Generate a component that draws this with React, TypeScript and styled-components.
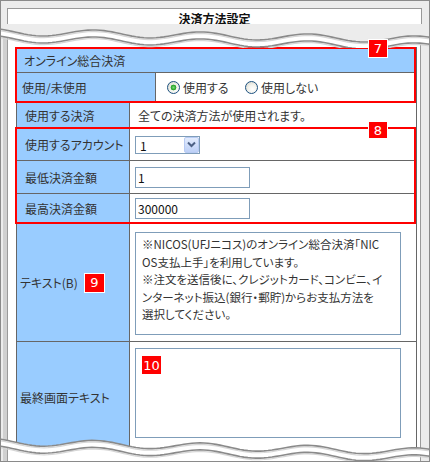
import React from "react";
import styled, { createGlobalStyle } from "styled-components";

const GlobalStyle = createGlobalStyle`
  html, body {
    margin: 0;
    padding: 0;
    background: #fff;
  }
  body {
    font-family: "Noto Sans CJK JP", "Liberation Sans", sans-serif;
    font-size: 12px;
    font-feature-settings: "palt" 1;
    color: #333;
  }
`;

const Frame = styled.div`
  position: relative;
  width: 430px;
  height: 462px;
  box-sizing: border-box;
  border: 1px solid #8a8a8a;
  background: #ececec;
  display: flex;
  flex-direction: column;
  overflow: hidden;
`;

const Header = styled.div`
  height: 35px;
  flex-shrink: 0;
  box-sizing: border-box;
  padding: 7px 0 0 6px;
`;

const TitleBox = styled.div`
  width: 415px;
  height: 20px;
  box-sizing: border-box;
  border: 1px solid #999;
  background: #fff;
  display: flex;
  align-items: center;
  justify-content: center;
  font-weight: bold;
  color: #111;
`;

const Sheet = styled.div`
  flex: 1;
  margin-left: 6px;
  width: 414px;
  box-sizing: border-box;
  border-left: 1px solid #9a9a9a;
  border-right: 1px solid #9a9a9a;
  background: #fff;
  box-shadow: -4px 0 0 #d0d0d0;
  padding: 11px 0 0 8px;
  overflow: hidden;
`;

const Table = styled.div`
  width: 401px;
  box-sizing: border-box;
  border: 1px solid #666;
  border-bottom: none;
`;

const Group = styled.div<{ $lift: number }>`
  position: relative;
  &::after {
    content: "";
    position: absolute;
    top: ${(p) => -p.$lift}px;
    left: -2px;
    right: 0;
    bottom: 0;
    border: 2px solid #ff0000;
    pointer-events: none;
  }
`;

const Row = styled.div<{ $h: number; $last?: boolean }>`
  display: flex;
  height: ${(p) => p.$h}px;
  box-sizing: border-box;
  border-bottom: ${(p) => (p.$last ? "none" : "1px solid #666")};
`;

const Caption = styled.div`
  flex: 1;
  display: flex;
  align-items: center;
  padding-left: 7px;
  background: #99ccff;
`;

const Label = styled.div<{ $w: number; $pad: number }>`
  width: ${(p) => p.$w}px;
  flex-shrink: 0;
  box-sizing: border-box;
  border-right: 1px solid #666;
  background: #99ccff;
  padding-left: ${(p) => p.$pad}px;
  display: flex;
  align-items: center;
  white-space: nowrap;
`;

const Value = styled.div<{ $pad: number; $top?: number }>`
  flex: 1;
  display: flex;
  align-items: ${(p) => (p.$top !== undefined ? "flex-start" : "center")};
  padding-left: ${(p) => p.$pad}px;
  padding-top: ${(p) => p.$top ?? 0}px;
`;

const Badge = styled.span<{ $w: number; $h: number; $plain?: boolean }>`
  display: inline-flex;
  align-items: center;
  justify-content: center;
  width: ${(p) => p.$w}px;
  height: ${(p) => p.$h}px;
  box-sizing: border-box;
  background: #ff0000;
  border: ${(p) => (p.$plain ? "none" : "1px solid #fff")};
  color: #fff;
  font-family: "DejaVu Sans", "Liberation Sans", sans-serif;
  font-size: 13px;
  line-height: 1;
`;

const CornerBadge = styled(Badge)<{ $top: number }>`
  position: absolute;
  top: ${(p) => p.$top}px;
  right: 28px;
  z-index: 3;
`;

const InlineBadge = styled(Badge)`
  margin-left: 6px;
`;

const RadioOption = styled.label<{ $w: number }>`
  display: inline-flex;
  align-items: center;
  gap: 3px;
  width: ${(p) => p.$w}px;
`;

const Radio = styled.input`
  appearance: none;
  margin: 0;
  width: 13px;
  height: 13px;
  border-radius: 50%;
  box-sizing: border-box;
  border: 1px solid #1c5180;
  background: radial-gradient(circle at 60% 65%, #ffffff 0%, #f2f2ec 45%, #cfcfc4 100%);
  &:checked {
    background: radial-gradient(circle at 50% 50%, #7bd67b 0, #21a121 2.6px, transparent 3.2px),
      radial-gradient(circle at 60% 65%, #ffffff 0%, #f2f2ec 45%, #cfcfc4 100%);
  }
`;

const Combo = styled.div`
  display: flex;
  width: 65px;
  height: 18px;
  box-sizing: border-box;
  border: 1px solid #7f9db9;
  background: #fff;
`;

const ComboSelect = styled.select`
  appearance: none;
  flex: 1;
  min-width: 0;
  border: none;
  outline: none;
  background: transparent;
  padding: 0 0 0 4px;
  font: inherit;
  color: #111;
`;

const ComboButton = styled.span`
  width: 15px;
  flex-shrink: 0;
  box-sizing: border-box;
  border: 1px solid #b8cbf3;
  border-radius: 2px;
  background: linear-gradient(#e3ecfd, #bdd0f7);
  display: flex;
  align-items: center;
  justify-content: center;
`;

const TextInput = styled.input`
  width: 115px;
  height: 21px;
  box-sizing: border-box;
  border: 1px solid #7f9db9;
  padding: 0 2px;
  font: inherit;
  font-size: 12px;
  color: #111;
  outline: none;
`;

const AreaWrap = styled.div`
  position: relative;
`;

const TextArea = styled.textarea<{ $h: number }>`
  display: block;
  width: 266px;
  height: ${(p) => p.$h}px;
  box-sizing: border-box;
  border: 1px solid #7f9db9;
  padding: 3px 6px;
  margin: 0;
  font: inherit;
  font-size: 11.5px;
  font-feature-settings: "palt" 1;
  line-height: 17.5px;
  color: #333;
  resize: none;
  overflow: hidden;
  white-space: pre;
  outline: none;
`;

const AreaBadge = styled(Badge)`
  position: absolute;
  left: 7px;
  top: 8px;
`;

const TearSvg = styled.svg<{ $top: number }>`
  position: absolute;
  left: -1px;
  top: ${(p) => p.$top - 1}px;
  pointer-events: none;
  z-index: 2;
`;

const PERIOD = 107;

const edge = (x: number, base: number, slope: number) =>
  base + slope * x - 3.5 * Math.cos((2 * Math.PI * (x - 95)) / PERIOD);

const sample = (from: number, to: number) => {
  const xs: number[] = [];
  for (let x = from; x < to; x += 4) xs.push(x);
  xs.push(to);
  return xs;
};

function Tear({
  top,
  height,
  base,
  slope,
  above,
}: {
  top: number;
  height: number;
  base: number;
  slope: number;
  above: boolean;
}) {
  const thick = 7;
  const xs = sample(0, 430);
  const at = (dy: number) => xs.map((x) => [x, edge(x, base, slope) - top + dy]);
  const pts = (arr: number[][]) => arr.map(([x, y]) => `${x},${y.toFixed(2)}`).join(" ");
  const up = at(0);
  const down = at(thick);

  // the torn-off side is painted with the colour of what lies beyond it
  let fill: string;
  let fillColor: string;
  if (above) {
    const fx = sample(1, 429).map((x) => [x, edge(x, base, slope) - top + 0.5]);
    fill = `1,0 429,0 ${pts([...fx].reverse())}`;
    fillColor = "#ececec";
  } else {
    const fx = sample(8, 419).map((x) => [x, edge(x, base, slope) - top + thick - 0.5]);
    fill = `${pts(fx)} 419,${height} 8,${height}`;
    fillColor = "#ffffff";
  }

  return (
    <TearSvg $top={top} width={430} height={height} viewBox={`0 0 430 ${height}`}>
      <polygon points={fill} fill={fillColor} />
      <polygon points={`${pts(up)} ${pts([...down].reverse())}`} fill="#ffffff" />
      <polyline points={pts(at(1.6))} fill="none" stroke="#d6d6d6" strokeWidth={1.2} />
      <polyline points={pts(at(thick + 1.6))} fill="none" stroke="#d6d6d6" strokeWidth={1.2} />
      <polyline points={pts(up)} fill="none" stroke="#8a8a8a" strokeWidth={1.6} />
      <polyline points={pts(down)} fill="none" stroke="#8a8a8a" strokeWidth={1.6} />
    </TearSvg>
  );
}

const noticeText = [
  "※NICOS(UFJニコス)のオンライン総合決済「NIC",
  "OS支払上手」を利用しています。",
  "※注文を送信後に、クレジットカード、コンビニ、イ",
  "ンターネット振込(銀行・郵貯)からお支払方法を",
  "選択してください。",
].join("\n");

export default function App() {
  return (
    <>
      <GlobalStyle />
      <Frame>
        <Header>
          <TitleBox>決済方法設定</TitleBox>
        </Header>
        <Sheet>
          <Table>
            <Group $lift={1}>
              <CornerBadge $w={20} $h={19} $top={-9}>
                7
              </CornerBadge>
              <Row $h={25}>
                <Caption>オンライン総合決済</Caption>
              </Row>
              <Row $h={30}>
                <Label $w={139} $pad={5}>
                  使用/未使用
                </Label>
                <Value $pad={11}>
                  <RadioOption $w={78}>
                    <Radio type="radio" name="use" defaultChecked />
                    使用する
                  </RadioOption>
                  <RadioOption $w={90}>
                    <Radio type="radio" name="use" />
                    使用しない
                  </RadioOption>
                </Value>
              </Row>
            </Group>
            <Row $h={26}>
              <Label $w={113} $pad={8}>
                使用する決済
              </Label>
              <Value $pad={8}>全ての決済方法が使用されます。</Value>
            </Row>
            <Group $lift={2}>
              <CornerBadge $w={20} $h={18} $top={-8}>
                8
              </CornerBadge>
              <Row $h={32}>
                <Label $w={113} $pad={8}>
                  使用するアカウント
                </Label>
                <Value $pad={5}>
                  <Combo>
                    <ComboSelect defaultValue="1">
                      <option value="1">1</option>
                      <option value="2">2</option>
                    </ComboSelect>
                    <ComboButton>
                      <svg width="9" height="7" viewBox="0 0 9 7">
                        <polyline
                          points="1,1.5 4.5,5 8,1.5"
                          fill="none"
                          stroke="#4d6185"
                          strokeWidth={2}
                        />
                      </svg>
                    </ComboButton>
                  </Combo>
                </Value>
              </Row>
              <Row $h={33}>
                <Label $w={113} $pad={8}>
                  最低決済金額
                </Label>
                <Value $pad={5}>
                  <TextInput defaultValue="1" />
                </Value>
              </Row>
              <Row $h={30}>
                <Label $w={113} $pad={8}>
                  最高決済金額
                </Label>
                <Value $pad={5}>
                  <TextInput defaultValue="300000" />
                </Value>
              </Row>
            </Group>
            <Row $h={118}>
              <Label $w={113} $pad={3}>
                テキスト(B)
                <InlineBadge $w={21} $h={20}>
                  9
                </InlineBadge>
              </Label>
              <Value $pad={5} $top={8}>
                <TextArea $h={103} readOnly value={noticeText} />
              </Value>
            </Row>
            <Row $h={110} $last>
              <Label $w={113} $pad={3}>
                最終画面テキスト
              </Label>
              <Value $pad={5} $top={6}>
                <AreaWrap>
                  <TextArea $h={90} readOnly value="" />
                  <AreaBadge $w={19} $h={18} $plain>
                    10
                  </AreaBadge>
                </AreaWrap>
              </Value>
            </Row>
          </Table>
        </Sheet>
        <Tear top={24} height={24} base={31.7} slope={8 / 430} above />
        <Tear top={434} height={27} base={441.7} slope={10 / 430} above={false} />
      </Frame>
    </>
  );
}
